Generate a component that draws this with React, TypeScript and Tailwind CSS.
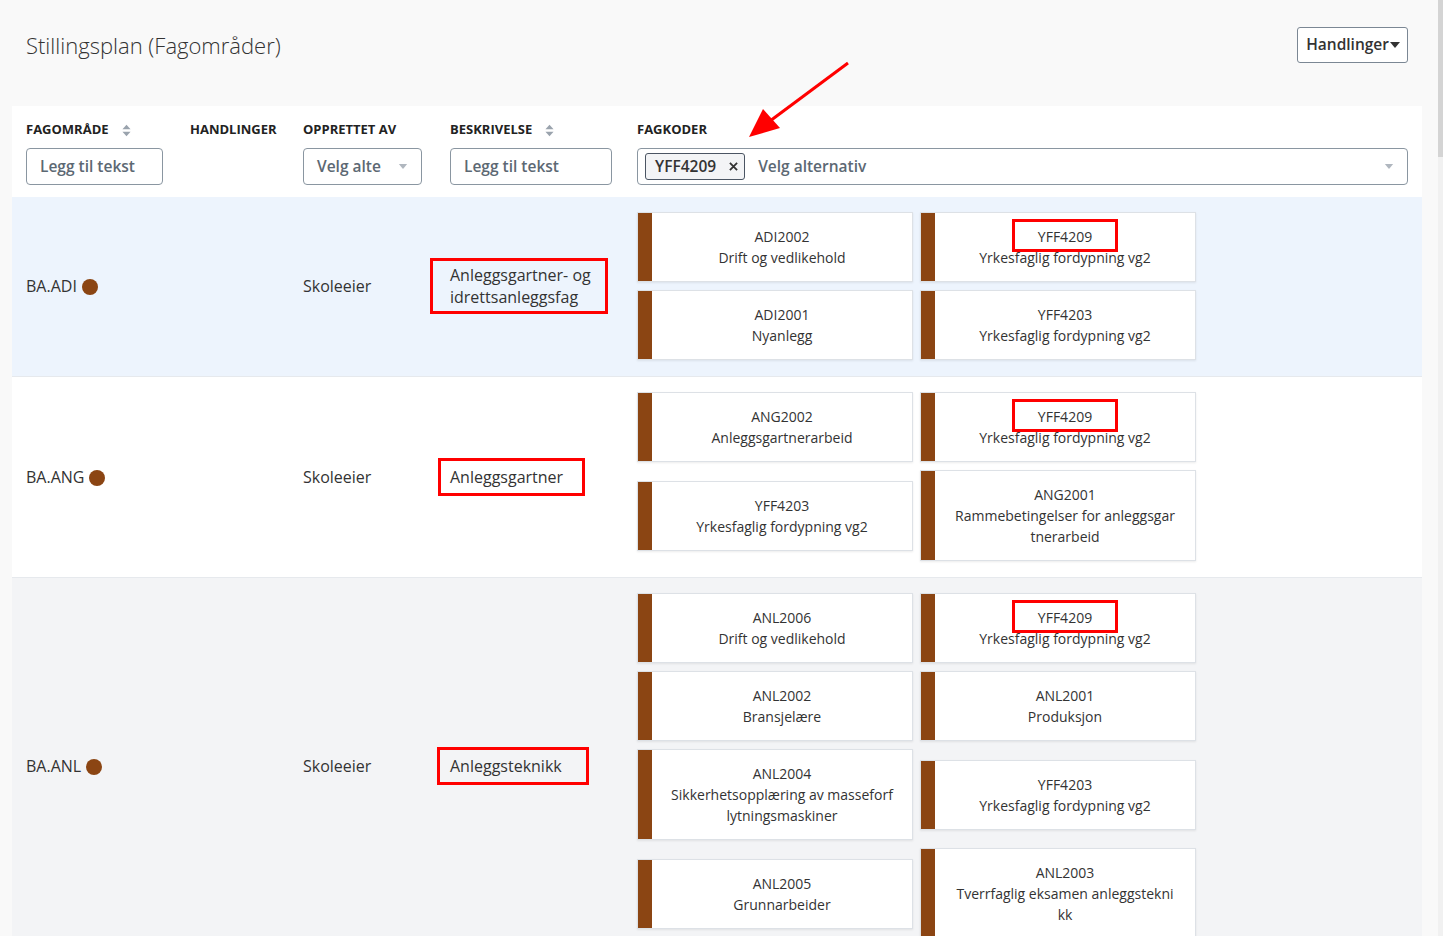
import React from "react";

type Fagkode = { code: string; name: string[]; marked?: boolean };
type Fagomrade = {
    id: string;
    beskrivelse: string[];
    boxPad: string;
    bg: string;
    pairs: Fagkode[][];
};

const rows: Fagomrade[] = [
    {
        id: "BA.ADI",
        beskrivelse: ["Anleggsgartner- og", "idrettsanleggsfag"],
        boxPad: "-ml-[20px] pl-[17px] pr-[14px] py-[3px]",
        bg: "bg-[#edf4fd]",
        pairs: [
            [
                { code: "ADI2002", name: ["Drift og vedlikehold"] },
                { code: "YFF4209", name: ["Yrkesfaglig fordypning vg2"], marked: true },
            ],
            [
                { code: "ADI2001", name: ["Nyanlegg"] },
                { code: "YFF4203", name: ["Yrkesfaglig fordypning vg2"] },
            ],
        ],
    },
    {
        id: "BA.ANG",
        beskrivelse: ["Anleggsgartner"],
        boxPad: "-ml-[12px] pl-[9px] pr-[19px] py-[5px]",
        bg: "bg-white",
        pairs: [
            [
                { code: "ANG2002", name: ["Anleggsgartnerarbeid"] },
                { code: "YFF4209", name: ["Yrkesfaglig fordypning vg2"], marked: true },
            ],
            [
                { code: "YFF4203", name: ["Yrkesfaglig fordypning vg2"] },
                { code: "ANG2001", name: ["Rammebetingelser for anleggsgar", "tnerarbeid"] },
            ],
        ],
    },
    {
        id: "BA.ANL",
        beskrivelse: ["Anleggsteknikk"],
        boxPad: "-ml-[13px] pl-[10px] pr-[24px] py-[5px]",
        bg: "bg-[#f3f4f6]",
        pairs: [
            [
                { code: "ANL2006", name: ["Drift og vedlikehold"] },
                { code: "YFF4209", name: ["Yrkesfaglig fordypning vg2"], marked: true },
            ],
            [
                { code: "ANL2002", name: ["Bransjelære"] },
                { code: "ANL2001", name: ["Produksjon"] },
            ],
            [
                { code: "ANL2004", name: ["Sikkerhetsopplæring av masseforf", "lytningsmaskiner"] },
                { code: "YFF4203", name: ["Yrkesfaglig fordypning vg2"] },
            ],
            [
                { code: "ANL2005", name: ["Grunnarbeider"] },
                { code: "ANL2003", name: ["Tverrfaglig eksamen anleggstekni", "kk"] },
            ],
        ],
    },
];

function SortIcon() {
    return (
        <svg viewBox="0 0 10 14" className="ml-[13px] h-[13px] w-[9px] text-[#9aa3ad]" fill="currentColor">
            <path d="M5 0.5 L9.5 5.5 H0.5 Z" />
            <path d="M5 13.5 L9.5 8.5 H0.5 Z" />
        </svg>
    );
}

function Caret({ className }: { className: string }) {
    return (
        <svg viewBox="0 0 10 6" className={className} fill="currentColor">
            <path d="M0 0 H10 L5 6 Z" />
        </svg>
    );
}

function Card({ item }: { item: Fagkode }) {
    return (
        <div className="flex border border-[#dde1e6] bg-white shadow-[0_1px_2px_rgba(0,0,0,0.08)]">
            <div className="w-[14px] shrink-0 bg-[#8b4513]" />
            <div className="flex-1 whitespace-nowrap px-[8px] py-[13px] text-center text-[14px] leading-[21px] text-[#333]">
                <div>
                    {item.marked ? (
                        <span className="relative">
                            {item.code}
                            <span className="absolute -inset-x-[26px] -top-[8px] -bottom-[6px] border-[3px] border-[#ff0000]" />
                        </span>
                    ) : (
                        item.code
                    )}
                </div>
                {item.name.map((l) => (
                    <div key={l}>{l}</div>
                ))}
            </div>
        </div>
    );
}

function App() {
    return (
        <div
            className="flex h-[936px] overflow-hidden bg-[#f9f9f9] text-[#333]"
            style={{ fontFamily: '"Open Sans", "Noto Sans", sans-serif' }}
        >
            <div className="relative flex-1 pl-[12px] pr-[16px]">
                {/* page header */}
                <div className="flex items-center justify-between px-[14px] pb-[43px] pt-[27px]">
                    <h1 className="text-[22px] font-light text-[#333]">Stillingsplan (Fagområder)</h1>
                    <button className="flex h-[36px] items-center rounded-[3px] border border-[#7b8794] bg-white pl-[8px] pr-[7px] text-[15.5px] font-semibold text-[#333]">
                        Handlinger
                        <Caret className="ml-[1px] h-[6px] w-[10px]" />
                    </button>
                </div>

                {/* red annotation arrow */}
                <svg className="pointer-events-none absolute left-[740px] top-[55px] h-[90px] w-[120px]" viewBox="0 0 120 90">
                    <line x1="108" y1="8" x2="30" y2="66" stroke="#ff0000" strokeWidth="3" />
                    <path d="M9 82 L23 54 L40 73 Z" fill="#ff0000" />
                </svg>

                <div className="bg-white">
                    {/* table header */}
                    <div className="grid grid-cols-[164px_113px_147px_187px_1fr] px-[14px] pb-[12px] pt-[15px]">
                        {[
                            { label: "FAGOMRÅDE", sort: true },
                            { label: "HANDLINGER", sort: false },
                            { label: "OPPRETTET AV", sort: false },
                            { label: "BESKRIVELSE", sort: true },
                            { label: "FAGKODER", sort: false },
                        ].map((h) => (
                            <div key={h.label} className="flex h-[18px] items-center text-[13px] font-bold text-[#222]">
                                {h.label}
                                {h.sort && <SortIcon />}
                            </div>
                        ))}
                        <div className="mt-[9px]">
                            <div className="flex h-[37px] w-[137px] items-center rounded-[4px] border border-[#8a96a1] px-[13px] text-[15.5px] font-semibold text-[#5c6873]">
                                Legg til tekst
                            </div>
                        </div>
                        <div />
                        <div className="mt-[9px]">
                            <div className="flex h-[37px] w-[119px] items-center rounded-[4px] border border-[#8a96a1] pl-[13px] pr-[13px] text-[15.5px] font-semibold text-[#5c6873]">
                                <span className="whitespace-nowrap">Velg alte</span>
                                <Caret className="ml-auto h-[5px] w-[10px] text-[#b0b7bf]" />
                            </div>
                        </div>
                        <div className="mt-[9px]">
                            <div className="flex h-[37px] w-[162px] items-center rounded-[4px] border border-[#8a96a1] px-[13px] text-[15.5px] font-semibold text-[#5c6873]">
                                Legg til tekst
                            </div>
                        </div>
                        <div className="mt-[9px]">
                            <div className="flex h-[37px] items-center rounded-[4px] border border-[#8a96a1] pl-[7px] pr-[13px] text-[15.5px] font-semibold">
                                <span className="flex h-[27px] items-center rounded-[3px] border border-[#4b5563] bg-[#f3f4f6] pl-[9px] pr-[6px] text-[#333]">
                                    YFF4209
                                    <svg viewBox="0 0 10 10" className="ml-[13px] h-[9px] w-[9px]" stroke="#333" strokeWidth="2">
                                        <path d="M1 1 L9 9 M9 1 L1 9" />
                                    </svg>
                                </span>
                                <span className="ml-[13px] text-[#5c6873]">Velg alternativ</span>
                                <Caret className="ml-auto h-[5px] w-[10px] text-[#b0b7bf]" />
                            </div>
                        </div>
                    </div>

                    {/* rows */}
                    {rows.map((row) => (
                        <div
                            key={row.id}
                            className={`grid grid-cols-[164px_113px_147px_187px_1fr] items-center border-b border-[#e6e9ed] px-[14px] pb-[16px] pt-[15px] text-[16px] ${row.bg}`}
                        >
                            <div className="flex items-center">
                                {row.id}
                                <span className="ml-[5px] mt-[2px] h-[16px] w-[16px] rounded-full bg-[#8b4513]" />
                            </div>
                            <div />
                            <div>Skoleeier</div>
                            <div>
                                <div className={`inline-block border-[3px] border-[#ff0000] leading-[22px] ${row.boxPad}`}>
                                    {row.beskrivelse.map((l) => (
                                        <div key={l}>{l}</div>
                                    ))}
                                </div>
                            </div>
                            <div className="grid grid-cols-[276px_276px] items-center gap-x-[7px] gap-y-[8px]">
                                {row.pairs.flat().map((item, i) => (
                                    <Card key={i} item={item} />
                                ))}
                            </div>
                        </div>
                    ))}
                </div>
            </div>

            {/* scrollbar */}
            <div className="w-[5px] bg-[#f1f1f1]">
                <div className="h-[157px] bg-[#d4d4d4]" />
            </div>
        </div>
    );
}

export default App;
